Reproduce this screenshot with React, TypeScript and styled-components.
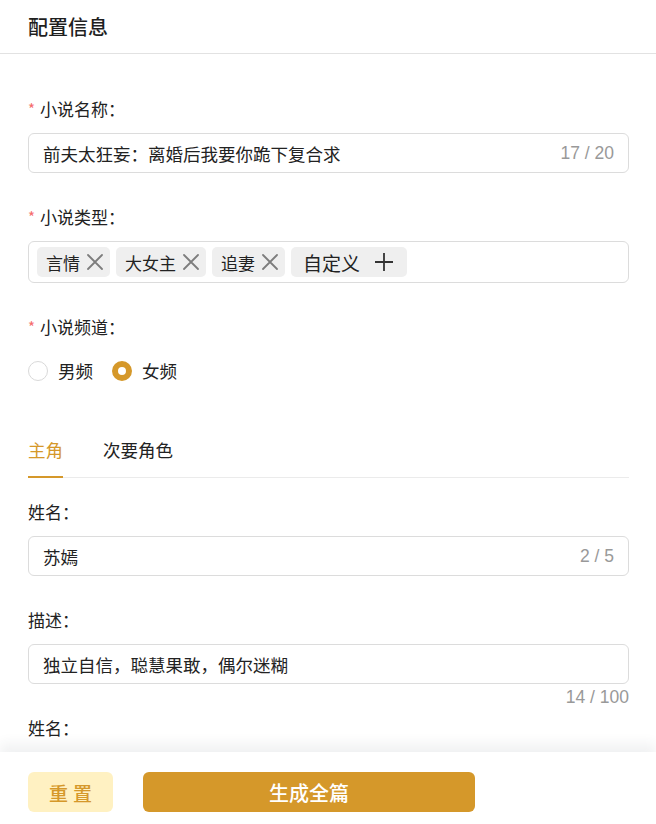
import React from "react";
import styled, { createGlobalStyle } from "styled-components";

const GlobalStyle = createGlobalStyle`
  html, body {
    margin: 0;
    padding: 0;
    background: #fff;
  }
  body {
    font-family: "Noto Sans CJK SC", "Noto Sans", sans-serif;
    color: #222;
  }
`;

const ACCENT = "#d5982a";

const Page = styled.div`
  height: 824px;
  display: flex;
  flex-direction: column;
  overflow: hidden;
`;

const Header = styled.div`
  height: 53px;
  flex-shrink: 0;
  display: flex;
  align-items: center;
  padding: 0 28px;
  border-bottom: 1px solid #e2e2e2;
  font-size: 20px;
  font-weight: 500;
  color: #1f1f1f;
`;

const Scroll = styled.div`
  flex: 1;
  overflow: hidden;
  padding: 44px 27px 0 28px;
`;

const Field = styled.div<{ $gap?: number }>`
  margin-bottom: ${(p) => p.$gap ?? 33}px;
`;

const Label = styled.div`
  font-size: 17px;
  line-height: 22px;
  margin-bottom: 13px;
  display: flex;
  align-items: center;
`;

const Star = styled.span`
  color: #f56c6c;
  margin-right: 5px;
  font-size: 15px;
`;

const InputBox = styled.div`
  height: 40px;
  box-sizing: border-box;
  border: 1px solid #dcdcdc;
  border-radius: 6px;
  display: flex;
  align-items: center;
  padding: 0 14px;
  font-size: 17.5px;
`;

const InputText = styled.span`
  flex: 1;
  color: #222;
`;

const Count = styled.span`
  color: #999;
  font-size: 17.5px;
  font-family: "Liberation Sans", "Noto Sans", sans-serif;
`;

const BelowCount = styled.div`
  text-align: right;
  color: #999;
  font-size: 17.5px;
  line-height: 20px;
  margin-top: 3px;
  margin-bottom: 10px;
  font-family: "Liberation Sans", "Noto Sans", sans-serif;
`;

const TagBox = styled.div`
  height: 42px;
  box-sizing: border-box;
  border: 1px solid #dcdcdc;
  border-radius: 6px;
  display: flex;
  align-items: center;
  gap: 6px;
  padding: 0 8px;
`;

const Tag = styled.div<{ $big?: boolean }>`
  height: 30px;
  display: flex;
  align-items: center;
  gap: ${(p) => (p.$big ? 14 : 6)}px;
  padding: 0 ${(p) => (p.$big ? 13 : 6)}px 0 ${(p) => (p.$big ? 12 : 9)}px;
  background: #efefef;
  border-radius: 5px;
  font-size: ${(p) => (p.$big ? 19 : 17)}px;
  color: #222;
`;

const RadioRow = styled.div`
  display: flex;
  align-items: center;
  gap: 19px;
  margin-top: 23px;
`;

const RadioItem = styled.div`
  display: flex;
  align-items: center;
  gap: 10px;
  font-size: 17.5px;
  line-height: 20px;
`;

const RadioDot = styled.span<{ $on?: boolean }>`
  width: 20px;
  height: 20px;
  box-sizing: border-box;
  border-radius: 50%;
  border: ${(p) => (p.$on ? `6.5px solid ${ACCENT}` : "1px solid #d9d9d9")};
  background: #fff;
`;

const Tabs = styled.div`
  display: flex;
  gap: 40px;
  border-bottom: 1px solid #ebebeb;
  margin-top: 47px;
  margin-bottom: 23px;
`;

const TabItem = styled.div<{ $active?: boolean }>`
  font-size: 17.5px;
  line-height: 24px;
  padding: 10px 0 14px;
  color: ${(p) => (p.$active ? ACCENT : "#222")};
  border-bottom: 2px solid ${(p) => (p.$active ? ACCENT : "transparent")};
  margin-bottom: -1px;
`;

const Footer = styled.div`
  height: 72px;
  flex-shrink: 0;
  display: flex;
  align-items: flex-start;
  gap: 30px;
  padding: 20px 28px 0;
  box-sizing: border-box;
  background: #fff;
  position: relative;
  box-shadow: 0 -8px 12px rgba(40, 60, 70, 0.07);
`;

const Button = styled.button<{ $primary?: boolean }>`
  height: 40px;
  border: none;
  border-radius: 6px;
  font-family: "Noto Sans CJK SC", sans-serif;
  font-size: ${(p) => (p.$primary ? 20 : 19)}px;
  font-weight: 500;
  width: ${(p) => (p.$primary ? 332 : 85)}px;
  background: ${(p) => (p.$primary ? ACCENT : "#fff1c2")};
  color: ${(p) => (p.$primary ? "#fff" : ACCENT)};
  letter-spacing: ${(p) => (p.$primary ? 0 : 5)}px;
  text-indent: ${(p) => (p.$primary ? 0 : 5)}px;
  padding: 0;
`;

const XIcon = () => (
  <svg width="18" height="18" viewBox="0 0 18 18" fill="none" stroke="#7d7d7d" strokeWidth="1.8" strokeLinecap="round">
    <path d="M2 2 L16 16 M16 2 L2 16" />
  </svg>
);

const PlusIcon = () => (
  <svg width="20" height="20" viewBox="0 0 20 20" fill="none" stroke="#333" strokeWidth="1.8">
    <path d="M10 1 V19 M1 10 H19" />
  </svg>
);

export default function App() {
  const tags = ["言情", "大女主", "追妻"];
  return (
    <Page>
      <GlobalStyle />
      <Header>配置信息</Header>
      <Scroll>
        <Field>
          <Label>
            <Star>*</Star>小说名称：
          </Label>
          <InputBox>
            <InputText>前夫太狂妄：离婚后我要你跪下复合求</InputText>
            <Count>17 / 20</Count>
          </InputBox>
        </Field>
        <Field>
          <Label>
            <Star>*</Star>小说类型：
          </Label>
          <TagBox>
            {tags.map((t) => (
              <Tag key={t}>
                {t}
                <XIcon />
              </Tag>
            ))}
            <Tag $big>
              自定义
              <PlusIcon />
            </Tag>
          </TagBox>
        </Field>
        <Field $gap={0}>
          <Label>
            <Star>*</Star>小说频道：
          </Label>
          <RadioRow>
            <RadioItem>
              <RadioDot />
              男频
            </RadioItem>
            <RadioItem>
              <RadioDot $on />
              女频
            </RadioItem>
          </RadioRow>
        </Field>
        <Tabs>
          <TabItem $active>主角</TabItem>
          <TabItem>次要角色</TabItem>
        </Tabs>
        <Field $gap={33}>
          <Label>姓名：</Label>
          <InputBox>
            <InputText>苏嫣</InputText>
            <Count>2 / 5</Count>
          </InputBox>
        </Field>
        <Field $gap={0}>
          <Label>描述：</Label>
          <InputBox>
            <InputText>独立自信，聪慧果敢，偶尔迷糊</InputText>
          </InputBox>
          <BelowCount>14 / 100</BelowCount>
        </Field>
        <Field>
          <Label>姓名：</Label>
          <InputBox>
            <InputText>陆景琛</InputText>
            <Count>3 / 5</Count>
          </InputBox>
        </Field>
      </Scroll>
      <Footer>
        <Button>重置</Button>
        <Button $primary>生成全篇</Button>
      </Footer>
    </Page>
  );
}
